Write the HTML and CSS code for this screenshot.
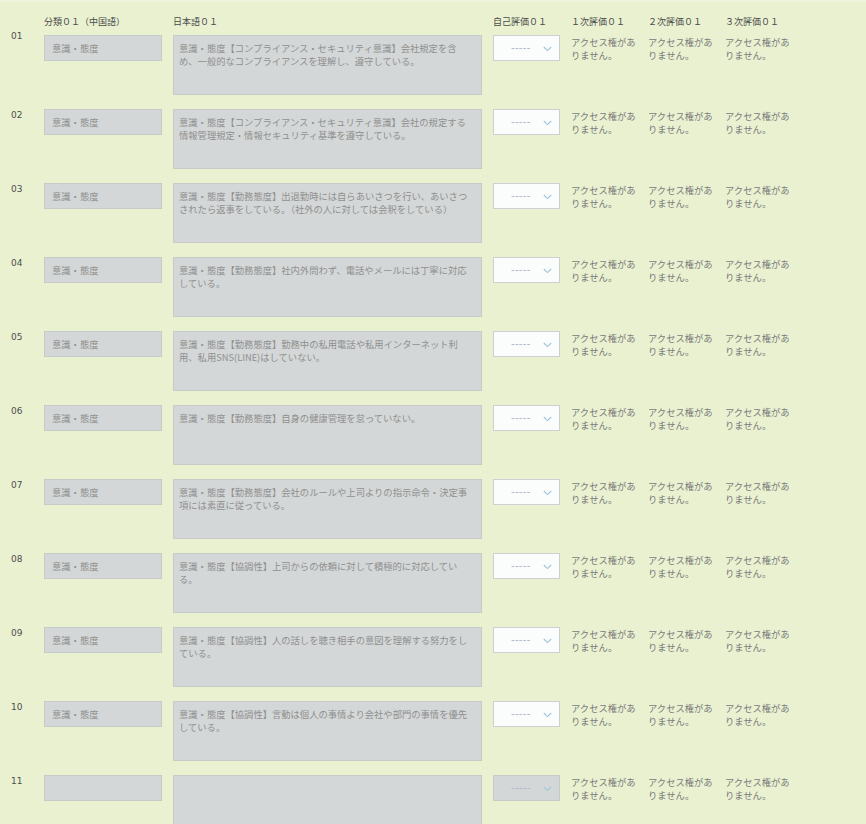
FILE: index.html
```html
<!DOCTYPE html>
<html lang="ja">
<head>
<meta charset="utf-8">
<title>評価シート</title>
<link rel="stylesheet" href="styles.css">
</head>
<body>
<main class="sheet">
  <div class="head">
    <span></span>
    <span>分類０１（中国語）</span>
    <span>日本語０１</span>
    <span>自己評価０１</span>
    <span>１次評価０１</span>
    <span>２次評価０１</span>
    <span>３次評価０１</span>
  </div>

  <div class="row">
    <div class="num num-first">01</div>
    <div class="field cat">意識・態度</div>
    <div class="field jp">意識・態度【コンプライアンス・セキュリティ意識】会社規定を含<br>め、一般的なコンプライアンスを理解し、遵守している。</div>
    <div class="select"><span class="dash">-----</span><svg class="chev" width="9" height="6" viewBox="0 0 9 6"><path d="M0.8 1 L4.5 4.6 L8.2 1" fill="none" stroke="#9fc6da" stroke-width="1.1"/></svg></div>
    <div class="acc">アクセス権がありません。</div>
    <div class="acc">アクセス権がありません。</div>
    <div class="acc">アクセス権がありません。</div>
  </div>

  <div class="row">
    <div class="num">02</div>
    <div class="field cat">意識・態度</div>
    <div class="field jp">意識・態度【コンプライアンス・セキュリティ意識】会社の規定する<br>情報管理規定・情報セキュリティ基準を遵守している。</div>
    <div class="select"><span class="dash">-----</span><svg class="chev" width="9" height="6" viewBox="0 0 9 6"><path d="M0.8 1 L4.5 4.6 L8.2 1" fill="none" stroke="#9fc6da" stroke-width="1.1"/></svg></div>
    <div class="acc">アクセス権がありません。</div>
    <div class="acc">アクセス権がありません。</div>
    <div class="acc">アクセス権がありません。</div>
  </div>

  <div class="row">
    <div class="num">03</div>
    <div class="field cat">意識・態度</div>
    <div class="field jp">意識・態度【勤務態度】出退勤時には自らあいさつを行い、あいさつ<br>されたら返事をしている。（社外の人に対しては会釈をしている）</div>
    <div class="select"><span class="dash">-----</span><svg class="chev" width="9" height="6" viewBox="0 0 9 6"><path d="M0.8 1 L4.5 4.6 L8.2 1" fill="none" stroke="#9fc6da" stroke-width="1.1"/></svg></div>
    <div class="acc">アクセス権がありません。</div>
    <div class="acc">アクセス権がありません。</div>
    <div class="acc">アクセス権がありません。</div>
  </div>

  <div class="row">
    <div class="num">04</div>
    <div class="field cat">意識・態度</div>
    <div class="field jp">意識・態度【勤務態度】社内外問わず、電話やメールには丁寧に対応<br>している。</div>
    <div class="select"><span class="dash">-----</span><svg class="chev" width="9" height="6" viewBox="0 0 9 6"><path d="M0.8 1 L4.5 4.6 L8.2 1" fill="none" stroke="#9fc6da" stroke-width="1.1"/></svg></div>
    <div class="acc">アクセス権がありません。</div>
    <div class="acc">アクセス権がありません。</div>
    <div class="acc">アクセス権がありません。</div>
  </div>

  <div class="row">
    <div class="num">05</div>
    <div class="field cat">意識・態度</div>
    <div class="field jp">意識・態度【勤務態度】勤務中の私用電話や私用インターネット利<br>用、私用SNS(LINE)はしていない。</div>
    <div class="select"><span class="dash">-----</span><svg class="chev" width="9" height="6" viewBox="0 0 9 6"><path d="M0.8 1 L4.5 4.6 L8.2 1" fill="none" stroke="#9fc6da" stroke-width="1.1"/></svg></div>
    <div class="acc">アクセス権がありません。</div>
    <div class="acc">アクセス権がありません。</div>
    <div class="acc">アクセス権がありません。</div>
  </div>

  <div class="row">
    <div class="num">06</div>
    <div class="field cat">意識・態度</div>
    <div class="field jp">意識・態度【勤務態度】自身の健康管理を怠っていない。</div>
    <div class="select"><span class="dash">-----</span><svg class="chev" width="9" height="6" viewBox="0 0 9 6"><path d="M0.8 1 L4.5 4.6 L8.2 1" fill="none" stroke="#9fc6da" stroke-width="1.1"/></svg></div>
    <div class="acc">アクセス権がありません。</div>
    <div class="acc">アクセス権がありません。</div>
    <div class="acc">アクセス権がありません。</div>
  </div>

  <div class="row">
    <div class="num">07</div>
    <div class="field cat">意識・態度</div>
    <div class="field jp">意識・態度【勤務態度】会社のルールや上司よりの指示命令・決定事<br>項には素直に従っている。</div>
    <div class="select"><span class="dash">-----</span><svg class="chev" width="9" height="6" viewBox="0 0 9 6"><path d="M0.8 1 L4.5 4.6 L8.2 1" fill="none" stroke="#9fc6da" stroke-width="1.1"/></svg></div>
    <div class="acc">アクセス権がありません。</div>
    <div class="acc">アクセス権がありません。</div>
    <div class="acc">アクセス権がありません。</div>
  </div>

  <div class="row">
    <div class="num">08</div>
    <div class="field cat">意識・態度</div>
    <div class="field jp">意識・態度【協調性】上司からの依頼に対して積極的に対応してい<br>る。</div>
    <div class="select"><span class="dash">-----</span><svg class="chev" width="9" height="6" viewBox="0 0 9 6"><path d="M0.8 1 L4.5 4.6 L8.2 1" fill="none" stroke="#9fc6da" stroke-width="1.1"/></svg></div>
    <div class="acc">アクセス権がありません。</div>
    <div class="acc">アクセス権がありません。</div>
    <div class="acc">アクセス権がありません。</div>
  </div>

  <div class="row">
    <div class="num">09</div>
    <div class="field cat">意識・態度</div>
    <div class="field jp">意識・態度【協調性】人の話しを聴き相手の意図を理解する努力をし<br>ている。</div>
    <div class="select"><span class="dash">-----</span><svg class="chev" width="9" height="6" viewBox="0 0 9 6"><path d="M0.8 1 L4.5 4.6 L8.2 1" fill="none" stroke="#9fc6da" stroke-width="1.1"/></svg></div>
    <div class="acc">アクセス権がありません。</div>
    <div class="acc">アクセス権がありません。</div>
    <div class="acc">アクセス権がありません。</div>
  </div>

  <div class="row">
    <div class="num">10</div>
    <div class="field cat">意識・態度</div>
    <div class="field jp">意識・態度【協調性】言動は個人の事情より会社や部門の事情を優先<br>している。</div>
    <div class="select"><span class="dash">-----</span><svg class="chev" width="9" height="6" viewBox="0 0 9 6"><path d="M0.8 1 L4.5 4.6 L8.2 1" fill="none" stroke="#9fc6da" stroke-width="1.1"/></svg></div>
    <div class="acc">アクセス権がありません。</div>
    <div class="acc">アクセス権がありません。</div>
    <div class="acc">アクセス権がありません。</div>
  </div>

  <div class="row">
    <div class="num">11</div>
    <div class="field cat"></div>
    <div class="field jp"></div>
    <div class="select select-disabled"><span class="dash">-----</span><svg class="chev" width="9" height="6" viewBox="0 0 9 6"><path d="M0.8 1 L4.5 4.6 L8.2 1" fill="none" stroke="#9fc6da" stroke-width="1.1"/></svg></div>
    <div class="acc">アクセス権がありません。</div>
    <div class="acc">アクセス権がありません。</div>
    <div class="acc">アクセス権がありません。</div>
  </div>
</main>
</body>
</html>
```

FILE: styles.css
```css
html, body {
  margin: 0;
  padding: 0;
  background: #e9f1d1;
}

body {
  font-family: "Noto Sans CJK JP", "DejaVu Sans", sans-serif;
  color: #555;
}

.sheet {
  border-top: 2px solid #eef4de;
  padding: 13px 0 0 11px;
  display: flex;
  flex-direction: column;
  gap: 14px;
}

.head,
.row {
  display: grid;
  grid-template-columns: 22px 118px 309px 67px 66px 66px 66px;
  column-gap: 11px;
  align-items: start;
}

.head {
  font-size: 9px;
  line-height: 13px;
  color: #4a4a4a;
  white-space: nowrap;
  margin-bottom: -7px;
}

.row {
  height: 60px;
}

.num {
  font-family: "DejaVu Sans", sans-serif;
  font-size: 9px;
  line-height: 13px;
  color: #4d4d4d;
  margin-top: 0;
}

.num-first {
  margin-top: -5px;
}

.field {
  box-sizing: border-box;
  background: #d4d7d7;
  border: 1px solid #c7cbc8;
  color: #8f8f8f;
  font-size: 9.3px;
  line-height: 13px;
  white-space: nowrap;
  overflow: hidden;
}

.cat {
  height: 26px;
  padding: 5.5px 6px 0 7px;
}

.jp {
  height: 60px;
  padding: 5.5px 4px 0 5px;
}

.select {
  box-sizing: border-box;
  height: 26px;
  background: #fbfcfc;
  border: 1px solid #cbd0d2;
  display: flex;
  align-items: center;
  padding: 0 0 0 17px;
  gap: 12px;
}

.select-disabled {
  background: #d4d7d7;
  border-color: #c7cbc8;
}

.dash {
  font-family: "DejaVu Sans", sans-serif;
  font-size: 10px;
  line-height: 10px;
  color: #abb8c6;
  letter-spacing: 0.3px;
}

.chev {
  display: block;
  margin-top: 1px;
}

.acc {
  font-size: 9.3px;
  line-height: 13px;
  color: #7a7a7a;
  margin-top: 0.5px;
}
```
